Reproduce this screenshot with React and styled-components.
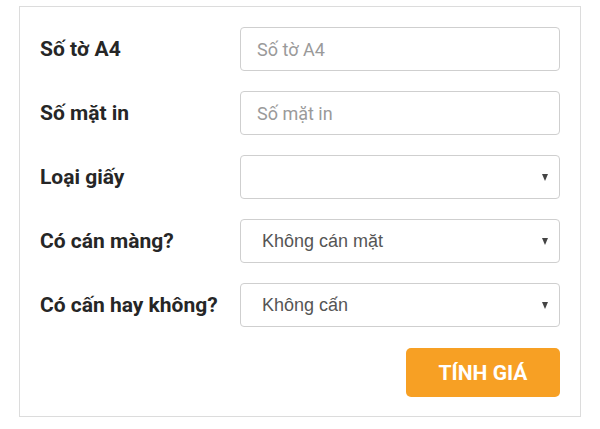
import React from "react";
import styled, { createGlobalStyle } from "styled-components";

const Global = createGlobalStyle`
  html, body { margin: 0; padding: 0; background: #fff; }
  body { font-family: Roboto, "Liberation Sans", sans-serif; }
  * { box-sizing: border-box; }
`;

const Card = styled.form`
  margin: 6px 0 0 19px;
  width: 562px;
  border: 1px solid #dcdcdc;
  padding: 20px 20px 19px 20px;
  display: flex;
  flex-direction: column;
  gap: 20px;
  background: #fff;
`;

const Row = styled.div`
  display: grid;
  grid-template-columns: 200px 320px;
  align-items: center;
`;

const Label = styled.label`
  font-family: Roboto, sans-serif;
  font-weight: 700;
  font-size: 21px;
  color: #262626;
`;

const Field = styled.div`
  position: relative;
  height: 44px;
  border: 1px solid #cfcfcf;
  border-radius: 4px;
  background: #fff;
  display: flex;
  align-items: center;
  padding-left: ${(p) => (p.$select ? "21px" : "16px")};
  font-family: ${(p) => (p.$select ? '"Liberation Sans", Arial, sans-serif' : "Roboto, sans-serif")};
  font-size: 18px;
  color: ${(p) => (p.$placeholder ? "#9a9a9a" : "#555")};
`;

const Arrow = styled.span`
  position: absolute;
  right: 11px;
  top: 50%;
  margin-top: -3px;
  width: 0;
  height: 0;
  border-left: 3.5px solid transparent;
  border-right: 3.5px solid transparent;
  border-top: 7px solid #444;
`;

const Actions = styled.div`
  display: flex;
  justify-content: flex-end;
  margin-top: 1px;
`;

const Button = styled.button`
  width: 154px;
  height: 49px;
  border: none;
  border-radius: 5px;
  background: #f7a024;
  color: #fff;
  font-family: Roboto, sans-serif;
  font-weight: 700;
  font-size: 21px;
  cursor: pointer;
`;

const rows = [
  { label: "Số tờ A4", text: "Số tờ A4", placeholder: true },
  { label: "Số mặt in", text: "Số mặt in", placeholder: true },
  { label: "Loại giấy", text: "", select: true },
  { label: "Có cán màng?", text: "Không cán mặt", select: true },
  { label: "Có cấn hay không?", text: "Không cấn", select: true },
];

export default function App() {
  return (
    <>
      <Global />
      <Card onSubmit={(e) => e.preventDefault()}>
        {rows.map((r) => (
          <Row key={r.label}>
            <Label>{r.label}</Label>
            <Field $select={r.select} $placeholder={r.placeholder}>
              {r.text}
              {r.select && <Arrow />}
            </Field>
          </Row>
        ))}
        <Actions>
          <Button type="submit">TÍNH GIÁ</Button>
        </Actions>
      </Card>
    </>
  );
}
